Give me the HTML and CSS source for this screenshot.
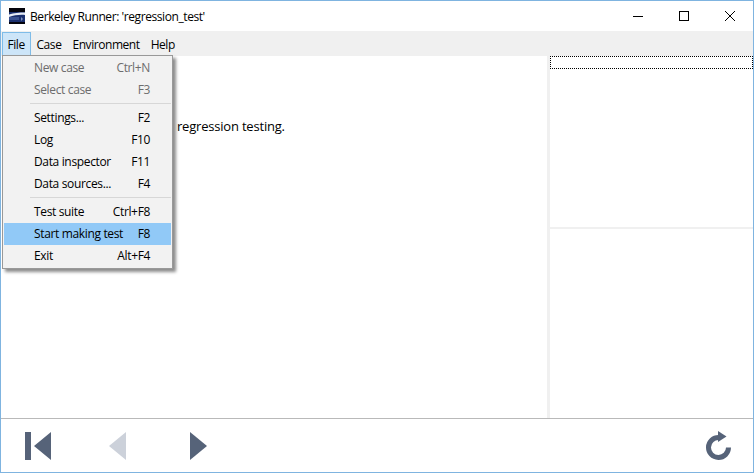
FILE: index.html
```html
<!DOCTYPE html>
<html lang="en">
<head>
<meta charset="utf-8">
<title>Berkeley Runner</title>
<link rel="stylesheet" href="styles.css">
</head>
<body>
<div class="window">
  <header class="titlebar">
    <svg class="app-logo" width="16" height="16" viewBox="0 0 16 16">
      <rect width="16" height="16" fill="#04040c"/>
      <rect y="4" width="16" height="10" fill="#1a2f6e"/>
      <path d="M0 6.500C5 5 10 4.500 16 4.500V7C10 6.500 5 7.500 0 9z" fill="#e6ebf4"/>
      <rect x="0" y="9" width="10" height="3" fill="#3a5291"/>
      <path d="M12 9l2 2-2 2z" fill="#7f93bd"/>
    </svg>
    <span class="title">Berkeley Runner: 'regression_test'</span>
    <div class="window-controls">
      <svg class="wc" width="46" height="30" viewBox="0 0 46 30"><path d="M18 15.500h10" stroke="#000" fill="none"/></svg>
      <svg class="wc" width="46" height="30" viewBox="0 0 46 30"><rect x="18.500" y="10.500" width="9" height="9" stroke="#000" fill="none"/></svg>
      <svg class="wc" width="46" height="30" viewBox="0 0 46 30"><path d="M18 10l10 10M28 10l-10 10" stroke="#000" fill="none"/></svg>
    </div>
  </header>
  <nav class="menubar">
    <span class="menu-title active">File</span>
    <span class="menu-title">Case</span>
    <span class="menu-title">Environment</span>
    <span class="menu-title">Help</span>
  </nav>
  <main class="content">
    <section class="left-pane">
      <p class="message">regression testing.</p>
    </section>
    <aside class="right-pane">
      <div class="right-top"><div class="focus-row"></div></div>
      <div class="right-bottom"></div>
    </aside>
  </main>
  <footer class="toolbar">
    <div class="nav-buttons">
      <svg class="tool first" width="26" height="28" viewBox="0 0 26 28"><path d="M0 0h6v28H0zM9 14L26 0v28z" fill="#566379"/></svg>
      <svg class="tool prev" width="17" height="28" viewBox="0 0 17 28"><path d="M17 0v28L0 14z" fill="#ccd1da"/></svg>
      <svg class="tool next" width="17" height="28" viewBox="0 0 17 28"><path d="M0 0v28l17-14z" fill="#566379"/></svg>
    </div>
    <svg class="tool reload" width="25" height="29" viewBox="0 0 25 29"><path d="M13 6.500A10 10 0 1 0 22.500 16.500" fill="none" stroke="#566379" stroke-width="5"/><path d="M12 0l8.500 5.500-8.500 5.500z" fill="#566379"/></svg>
  </footer>

  <div class="dropdown">
    <div class="item disabled"><span>New case</span><span>Ctrl+N</span></div>
    <div class="item disabled"><span>Select case</span><span>F3</span></div>
    <div class="separator"></div>
    <div class="item"><span>Settings...</span><span>F2</span></div>
    <div class="item"><span>Log</span><span>F10</span></div>
    <div class="item"><span>Data inspector</span><span>F11</span></div>
    <div class="item"><span>Data sources...</span><span>F4</span></div>
    <div class="separator"></div>
    <div class="item"><span>Test suite</span><span>Ctrl+F8</span></div>
    <div class="item selected"><span>Start making test</span><span>F8</span></div>
    <div class="item"><span>Exit</span><span>Alt+F4</span></div>
  </div>
</div>
</body>
</html>
```
FILE: styles.css
```css
* { box-sizing: border-box; }
html, body { margin: 0; height: 100%; }
body { background: #fff; font-family: "Open Sans", "Noto Sans", sans-serif; font-size: 12px; color: #000; overflow: hidden; }
.window { position: relative; width: 754px; height: 473px; border: 1px solid #7fb4e0; display: flex; flex-direction: column; background: #fff; }
.titlebar { height: 30px; display: flex; align-items: center; padding-left: 8px; flex: none; }
.app-logo { flex: none; }
.title { margin-left: 5px; letter-spacing: -0.42px; }
.window-controls { margin-left: auto; display: flex; }
.wc { display: block; }
.menubar { height: 25px; flex: none; background: #f0f0f0; display: flex; align-items: center; padding-left: 1px; }
.menu-title { height: 24px; margin-top: 1px; display: flex; align-items: center; border: 1px solid transparent; letter-spacing: -0.44px; padding: 0 4.500px; }
.menu-title.active { background: #cde5f8; border-color: #7fbce8; width: 29px; }
.content { flex: 1; display: flex; min-height: 0; }
.left-pane { flex: 1; border-right: 3px solid #f0f0f0; padding: 61px 0 0 176px; }
.message { margin: 0; font-size: 13px; letter-spacing: -0.2px; line-height: 18px; }
.right-pane { width: 203px; flex: none; display: flex; flex-direction: column; }
.right-top { height: 173px; border-bottom: 2px solid #f0f0f0; flex: none; }
.focus-row { height: 13px; border: 1px dotted #000; }
.right-bottom { flex: 1; }
.toolbar { height: 54px; flex: none; border-top: 1px solid #b9b9b9; display: flex; align-items: center; justify-content: space-between; padding: 0 22px 0 24px; }
.nav-buttons { display: flex; align-items: center; }
.tool { display: block; }
.prev { margin-left: 58px; }
.next { margin-left: 64px; }
.dropdown { position: absolute; left: 1px; top: 54px; width: 171px; height: 214px; padding: 1px 1px 0; background: #f2f2f2; border: 1px solid #999; box-shadow: 3px 3px 3px rgba(0,0,0,.45); }
.item { height: 22px; display: flex; justify-content: space-between; align-items: center; padding: 0 21px 1px 30px; letter-spacing: -0.35px; color: #000; }
.item.disabled { color: #6d6d6d; }
.item.selected { background: #91c9f7; }
.separator { height: 6px; margin-left: 26px; position: relative; }
.separator::after { content: ""; position: absolute; left: 0; right: 0; top: 2px; height: 1px; background: #d7d7d7; }
```
